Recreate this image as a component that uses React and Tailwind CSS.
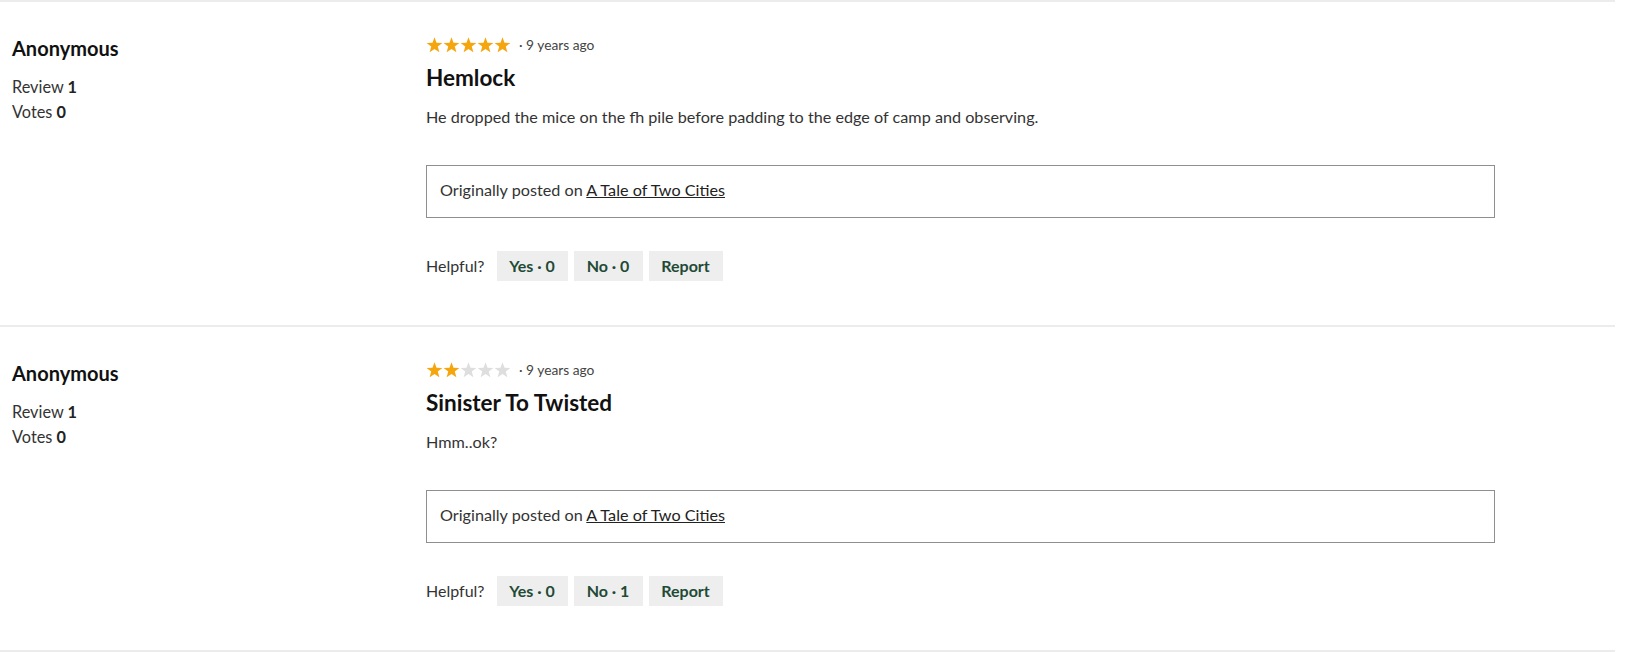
import React from "react";

function Star({ filled }) {
  return (
    <svg width="17" height="16" viewBox="0 0 24 23" className="block">
      <polygon
        points="12,0.5 14.9,8.3 23.3,8.6 16.7,13.8 19,21.9 12,17.2 5,21.9 7.3,13.8 0.7,8.6 9.1,8.3"
        fill={filled ? "#f5a60f" : "#dedede"}
      />
    </svg>
  );
}

function Review({ stars, title, body, no }) {
  return (
    <div className="flex border-t-2 border-[#ececec] pt-8 pb-[44px]">
      <div className="w-[426px] shrink-0 pl-3">
        <div className="text-[20px] leading-[28px] font-bold text-[#111]">Anonymous</div>
        <div className="mt-3 text-[16.3px] leading-[25px] text-[#333]">
          Review <span className="font-bold text-[#222]">1</span>
        </div>
        <div className="text-[16.3px] leading-[25px] text-[#333]">
          Votes <span className="font-bold text-[#222]">0</span>
        </div>
      </div>
      <div className="w-[1069px] shrink-0">
        <div className="flex h-[22px] items-center">
          <div className="flex">
            {[0, 1, 2, 3, 4].map((i) => (
              <Star key={i} filled={i < stars} />
            ))}
          </div>
          <span className="ml-[8px] text-[13.75px] leading-[22px] text-[#444]">· 9 years ago</span>
        </div>
        <div className="mt-2 text-[22.5px] leading-[28px] font-bold text-[#111]">{title}</div>
        <p className="mt-[13px] text-[16.2px] leading-[24px] text-[#333]">{body}</p>
        <div className="mt-9 border border-[#8f8f8f] pl-[13px] pt-3 pb-[15px] text-[16.2px] leading-[24px] text-[#333]">
          Originally posted on{" "}
          <a className="underline text-[#222]" href="#">
            A Tale of Two Cities
          </a>
        </div>
        <div className="mt-[33px] flex items-center">
          <span className="mr-3 text-[16px] text-[#333]">Helpful?</span>
          <div className="flex gap-[6px]">
            <button className="h-[30px] w-[71px] bg-[#eeeeee] text-[16px] font-bold text-[#1f4a36]">
              Yes · 0
            </button>
            <button className="h-[30px] w-[69px] bg-[#eeeeee] text-[16px] font-bold text-[#1f4a36]">
              No · {no}
            </button>
            <button className="h-[30px] w-[74px] bg-[#eeeeee] text-[16px] font-bold text-[#1f4a36]">
              Report
            </button>
          </div>
        </div>
      </div>
    </div>
  );
}

export default function App() {
  return (
    <div className="w-[1630px] h-[652px] bg-white font-['Lato',sans-serif]">
      <div className="w-[1615px] border-b-2 border-[#ececec]">
        <Review
          stars={5}
          title="Hemlock"
          body="He dropped the mice on the fh pile before padding to the edge of camp and observing."
          no={0}
        />
        <Review stars={2} title="Sinister To Twisted" body="Hmm..ok?" no={1} />
      </div>
    </div>
  );
}
